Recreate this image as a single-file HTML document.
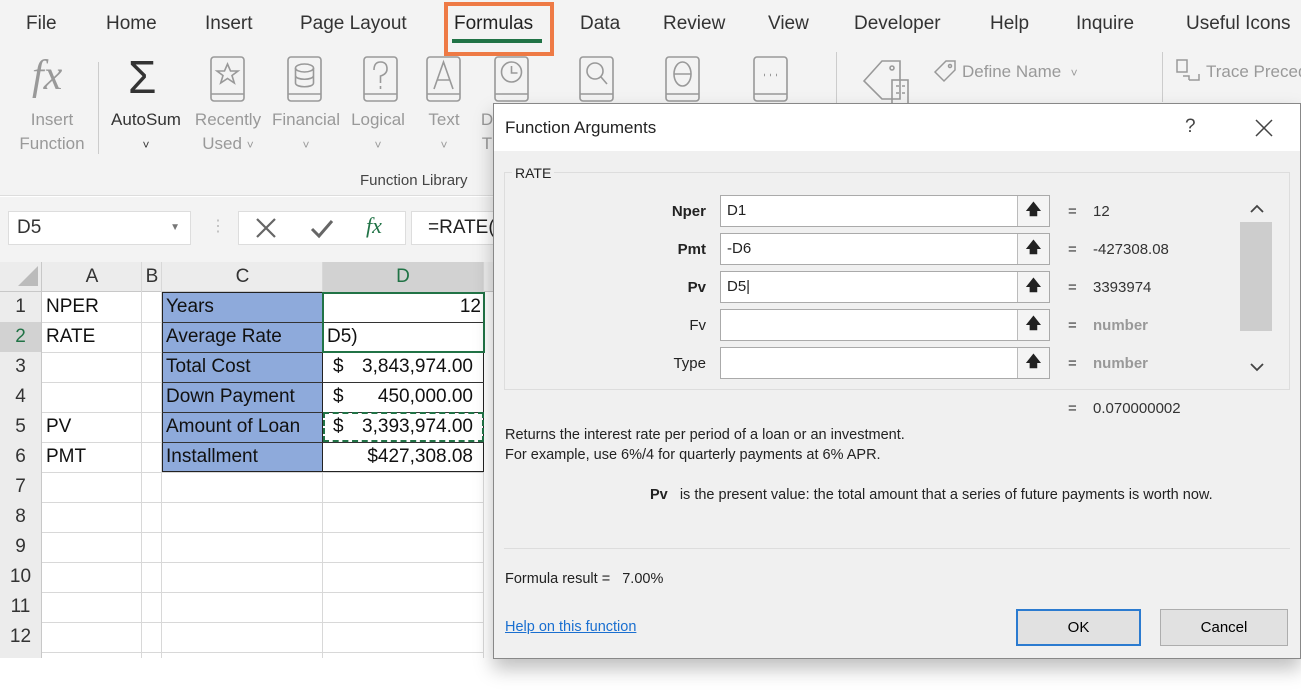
<!DOCTYPE html>
<html><head><style>
*{margin:0;padding:0;box-sizing:border-box}
body{width:1301px;height:696px;overflow:hidden;background:#fff;font-family:"Liberation Sans",sans-serif;position:relative}
.abs{position:absolute}
.tab{position:absolute;top:13px;font-size:19px;color:#333}
.rib{position:absolute;font-size:17px;color:#999;text-align:center;line-height:24px;white-space:nowrap}
.rib small{font-size:12px}
.cell{position:absolute;font-size:19px;color:#111;line-height:30px;white-space:nowrap}
.rh{position:absolute;left:0;width:41px;text-align:center;font-size:19px;color:#333;background:#ececec;line-height:30px;border-bottom:1px solid #d4d4d4}
.lab{position:absolute;right:595px;font-size:15px;color:#222}
.inp{position:absolute;left:720px;width:330px;height:32px;border:1px solid #aaa;background:#fff;font-size:15px;padding-left:6px;line-height:30px;color:#222}
.inp .b{position:absolute;right:0;top:0;width:32px;height:30px;border-left:1px solid #bbb;background:#f4f4f4;text-align:center;font-weight:bold;font-size:15px;line-height:28px}
.eq{position:absolute;left:1068px;font-size:15px;color:#333}
.val{position:absolute;left:1093px;font-size:15px;color:#333}
.t{font-size:15px;color:#222;position:absolute}
</style></head><body>
<div class="abs" style="left:0;top:0;width:1301px;height:196px;background:#f3f3f3;border-bottom:1px solid #ddd"></div>
<div class="tab" style="left:26px">File</div>
<div class="tab" style="left:106px">Home</div>
<div class="tab" style="left:205px">Insert</div>
<div class="tab" style="left:300px">Page Layout</div>
<div class="abs" style="left:444px;top:2px;width:110px;height:54px;border:4px solid #ee7a45"></div>
<div class="tab" style="left:454px;color:#222">Formulas</div>
<div class="abs" style="left:452px;top:39px;width:90px;height:4px;background:#217346"></div>
<div class="tab" style="left:580px">Data</div>
<div class="tab" style="left:663px">Review</div>
<div class="tab" style="left:768px">View</div>
<div class="tab" style="left:854px">Developer</div>
<div class="tab" style="left:990px">Help</div>
<div class="tab" style="left:1076px">Inquire</div>
<div class="tab" style="left:1186px">Useful Icons</div>
<div class="abs" style="left:32px;top:52px;font-family:'Liberation Serif',serif;font-style:italic;font-size:42px;color:#999">fx</div>
<div class="rib" style="left:12px;top:108px;width:80px">Insert<br>Function</div>
<div class="abs" style="left:98px;top:62px;width:1px;height:92px;background:#ccc"></div>
<div class="abs" style="left:128px;top:50px;font-size:46px;color:#333">&Sigma;</div>
<div class="rib" style="left:104px;top:108px;width:84px;color:#333">AutoSum<br><small>&#709;</small></div>
<div class="rib" style="left:193px;top:108px;width:70px">Recently<br>Used <small>&#709;</small></div>
<div class="rib" style="left:268px;top:108px;width:76px">Financial<br><small>&#709;</small></div>
<div class="rib" style="left:348px;top:108px;width:60px">Logical<br><small>&#709;</small></div>
<div class="rib" style="left:424px;top:108px;width:40px">Text<br><small>&#709;</small></div>
<div class="rib" style="left:480px;top:108px;width:14px">D<br>T</div>
<svg class="abs" style="left:200px;top:56px" width="600" height="48" fill="none" stroke="#999" stroke-width="1.6">
<g><rect x="11" y="1" width="33" height="44" rx="3"/><path d="M11 38h33"/><path d="M27.5 8l3 7h7.5l-6 4.5 2.3 7.5-6.8-4.5-6.8 4.5 2.3-7.5-6-4.5h7.5z"/></g>
<g transform="translate(77,0)"><rect x="11" y="1" width="33" height="44" rx="3"/><path d="M11 38h33"/><ellipse cx="27.5" cy="12" rx="9" ry="4"/><path d="M18.5 12v15c0 5 18 5 18 0V12M18.5 19.5c0 5 18 5 18 0"/></g>
<g transform="translate(153,0)"><rect x="11" y="1" width="33" height="44" rx="3"/><path d="M11 38h33"/><path d="M21 14q0-8 6.5-8t6.5 7q0 5-6.5 7v7M27.5 30v3"/></g>
<g transform="translate(216,0)"><rect x="11" y="1" width="33" height="44" rx="3"/><path d="M11 38h33"/><path d="M18 33l9.5-27 9.5 27M21 24h13"/></g>
<g transform="translate(284,0)"><rect x="11" y="1" width="33" height="44" rx="3"/><path d="M11 38h33"/><circle cx="27.5" cy="16" r="10"/><path d="M27.5 10v7h6"/></g>
<g transform="translate(369,0)"><rect x="11" y="1" width="33" height="44" rx="3"/><path d="M11 38h33"/><circle cx="26" cy="15" r="8"/><path d="M32 21l6 7"/></g>
<g transform="translate(455,0)"><rect x="11" y="1" width="33" height="44" rx="3"/><path d="M11 38h33"/><ellipse cx="27.5" cy="18" rx="8.5" ry="12"/><path d="M19 18h17"/></g>
<g transform="translate(543,0)"><rect x="11" y="1" width="33" height="44" rx="3"/><path d="M11 38h33"/><path d="M21 19h1M27 19h1M33 19h1" stroke-width="2.5"/></g>
</svg>
<div class="abs" style="left:360px;top:172px;font-size:15px;color:#444">Function Library</div>
<div class="abs" style="left:836px;top:52px;width:1px;height:100px;background:#ccc"></div>
<svg class="abs" style="left:932px;top:58px" width="28" height="26" fill="none" stroke="#999" stroke-width="1.5"><path d="M3 14L14 3h9v9L12 23z"/><circle cx="18" cy="8" r="1.5"/></svg>
<div class="abs" style="left:962px;top:62px;font-size:17px;color:#999;white-space:nowrap">Define Name &nbsp;<small style="font-size:12px">&#709;</small></div>
<div class="abs" style="left:1162px;top:52px;width:1px;height:50px;background:#ccc"></div>
<div class="abs" style="left:1206px;top:62px;font-size:17px;color:#999;white-space:nowrap">Trace Preced</div>
<svg class="abs" style="left:858px;top:56px" width="60" height="50" fill="none" stroke="#999" stroke-width="1.6"><path d="M6 25l18-20h18v38H24z"/><circle cx="34" cy="12" r="2"/><rect x="34" y="24" width="16" height="24"/><path d="M38 30h3M38 37h3M44 30h3M44 37h3"/></svg>
<svg class="abs" style="left:1175px;top:58px" width="28" height="26" fill="none" stroke="#999" stroke-width="1.5"><rect x="2" y="2" width="10" height="12"/><path d="M8 18h6v4M14 22h10v-6"/></svg>
<div class="abs" style="left:0;top:197px;width:1301px;height:66px;background:#f3f3f3"></div>
<div class="abs" style="left:8px;top:211px;width:183px;height:34px;background:#fff;border:1px solid #ddd;font-size:19px;line-height:32px;padding-left:8px;color:#333">D5<span style="position:absolute;right:10px;font-size:10px;color:#777">&#9660;</span></div>
<div class="abs" style="left:210px;top:216px;color:#bbb;font-size:16px">&#8942;</div>
<div class="abs" style="left:238px;top:211px;width:168px;height:34px;background:#fff;border:1px solid #ddd"></div>
<svg class="abs" style="left:255px;top:218px" width="22" height="20" stroke="#666" stroke-width="2.2"><path d="M2 1l18 18M20 1L2 19"/></svg>
<svg class="abs" style="left:310px;top:219px" width="24" height="20" fill="none" stroke="#666" stroke-width="3"><path d="M2 10l7 7L22 2"/></svg>
<div class="abs" style="left:366px;top:213px;font-family:'Liberation Serif',serif;font-style:italic;font-size:22px;color:#217346">fx</div>
<div class="abs" style="left:411px;top:211px;width:90px;height:34px;background:#fff;border:1px solid #ddd;font-size:19px;line-height:32px;padding-left:16px;color:#222">=RATE(</div>
<div class="abs" style="left:0;top:262px;width:493px;height:30px;background:#ececec;border-bottom:1px solid #c8c8c8"></div>
<div class="abs" style="left:18px;top:266px;width:0;height:0;border-left:20px solid transparent;border-bottom:20px solid #bbb"></div>
<div class="cell" style="left:42px;top:262px;width:100px;text-align:center;color:#333">A</div>
<div class="cell" style="left:142px;top:262px;width:20px;text-align:center;color:#333">B</div>
<div class="cell" style="left:162px;top:262px;width:161px;text-align:center;color:#333">C</div>
<div class="abs" style="left:323px;top:262px;width:160px;height:30px;background:#d2d2d2"></div>
<div class="cell" style="left:323px;top:262px;width:160px;text-align:center;color:#217346">D</div>
<div class="abs" style="left:41px;top:262px;width:1px;height:396px;background:#c8c8c8"></div>
<div class="abs" style="left:141px;top:262px;width:1px;height:396px;background:#d8d8d8"></div>
<div class="abs" style="left:161px;top:262px;width:1px;height:396px;background:#d8d8d8"></div>
<div class="abs" style="left:322px;top:262px;width:1px;height:396px;background:#d8d8d8"></div>
<div class="abs" style="left:483px;top:262px;width:1px;height:396px;background:#d8d8d8"></div>
<div class="abs" style="left:42px;top:322px;width:441px;height:1px;background:#d8d8d8"></div>
<div class="abs" style="left:42px;top:352px;width:441px;height:1px;background:#d8d8d8"></div>
<div class="abs" style="left:42px;top:382px;width:441px;height:1px;background:#d8d8d8"></div>
<div class="abs" style="left:42px;top:412px;width:441px;height:1px;background:#d8d8d8"></div>
<div class="abs" style="left:42px;top:442px;width:441px;height:1px;background:#d8d8d8"></div>
<div class="abs" style="left:42px;top:472px;width:441px;height:1px;background:#d8d8d8"></div>
<div class="abs" style="left:42px;top:502px;width:441px;height:1px;background:#d8d8d8"></div>
<div class="abs" style="left:42px;top:532px;width:441px;height:1px;background:#d8d8d8"></div>
<div class="abs" style="left:42px;top:562px;width:441px;height:1px;background:#d8d8d8"></div>
<div class="abs" style="left:42px;top:592px;width:441px;height:1px;background:#d8d8d8"></div>
<div class="abs" style="left:42px;top:622px;width:441px;height:1px;background:#d8d8d8"></div>
<div class="abs" style="left:42px;top:652px;width:441px;height:1px;background:#d8d8d8"></div>
<div class="rh" style="top:292px">1</div><div class="rh" style="top:322px;color:#217346;background:#d2d2d2">2</div><div class="rh" style="top:352px">3</div><div class="rh" style="top:382px">4</div><div class="rh" style="top:412px">5</div><div class="rh" style="top:442px">6</div><div class="rh" style="top:472px">7</div><div class="rh" style="top:502px">8</div><div class="rh" style="top:532px">9</div><div class="rh" style="top:562px">10</div><div class="rh" style="top:592px">11</div><div class="rh" style="top:622px">12</div>
<div class="abs" style="left:0;top:652px;width:41px;height:6px;background:#ececec"></div>
<div class="abs" style="left:162px;top:292px;width:161px;height:180px;background:#8eaadb;border:1px solid #222"></div>
<div class="abs" style="left:322px;top:292px;width:162px;height:180px;border:1px solid #222"></div>
<div class="abs" style="left:162px;top:322px;width:322px;height:1px;background:#333"></div>
<div class="abs" style="left:162px;top:352px;width:322px;height:1px;background:#333"></div>
<div class="abs" style="left:162px;top:382px;width:322px;height:1px;background:#333"></div>
<div class="abs" style="left:162px;top:412px;width:322px;height:1px;background:#333"></div>
<div class="abs" style="left:162px;top:442px;width:322px;height:1px;background:#333"></div>
<div class="abs" style="left:322px;top:292px;width:163px;height:61px;border:2px solid #217346"></div>
<div class="abs" style="left:323px;top:412px;width:161px;height:30px;border:2px dashed #217346"></div>
<div class="cell" style="left:46px;top:292px">NPER</div>
<div class="cell" style="left:46px;top:322px">RATE</div>
<div class="cell" style="left:46px;top:412px">PV</div>
<div class="cell" style="left:46px;top:442px">PMT</div>
<div class="cell" style="left:166px;top:292px">Years</div>
<div class="cell" style="left:166px;top:322px">Average Rate</div>
<div class="cell" style="left:166px;top:352px">Total Cost</div>
<div class="cell" style="left:166px;top:382px">Down Payment</div>
<div class="cell" style="left:166px;top:412px">Amount of Loan</div>
<div class="cell" style="left:166px;top:442px">Installment</div>
<div class="cell" style="left:323px;top:292px;width:158px;text-align:right">12</div>
<div class="cell" style="left:327px;top:322px">D5)</div>
<div class="cell" style="left:333px;top:352px">$</div><div class="cell" style="left:323px;top:352px;width:150px;text-align:right">3,843,974.00</div>
<div class="cell" style="left:333px;top:382px">$</div><div class="cell" style="left:323px;top:382px;width:150px;text-align:right">450,000.00</div>
<div class="cell" style="left:333px;top:412px">$</div><div class="cell" style="left:323px;top:412px;width:150px;text-align:right">3,393,974.00</div>
<div class="cell" style="left:323px;top:442px;width:150px;text-align:right">$427,308.08</div>
<div class="abs" style="left:0;top:658px;width:493px;height:38px;background:#fff"></div>
<div class="abs" style="left:493px;top:103px;width:808px;height:556px;background:#f0f0f0;border:1px solid #888;box-shadow:0 10px 18px rgba(0,0,0,0.25)"></div>
<div class="abs" style="left:494px;top:104px;width:806px;height:47px;background:#fff"></div>
<div class="t" style="left:505px;top:118px;font-size:17px">Function Arguments</div>
<div class="t" style="left:1185px;top:116px;font-size:19px;color:#444">?</div>
<svg class="abs" style="left:1255px;top:119px" width="18" height="18" stroke="#444" stroke-width="1.5"><path d="M1 1l16 16M17 1L1 17"/></svg>
<div class="abs" style="left:504px;top:172px;width:786px;height:218px;border:1px solid #ddd"></div>
<div class="t" style="left:512px;top:165px;background:#f0f0f0;padding:0 3px;font-size:14px">RATE</div>
<div class="lab" style="top:203px;font-weight:bold">Nper</div>
<div class="lab" style="top:241px;font-weight:bold">Pmt</div>
<div class="lab" style="top:279px;font-weight:bold">Pv</div>
<div class="lab" style="top:317px">Fv</div>
<div class="lab" style="top:355px">Type</div>
<div class="inp" style="top:195px">D1<div class="b">&#129093;</div></div>
<div class="inp" style="top:233px">-D6<div class="b">&#129093;</div></div>
<div class="inp" style="top:271px">D5|<div class="b">&#129093;</div></div>
<div class="inp" style="top:309px"><div class="b">&#129093;</div></div>
<div class="inp" style="top:347px"><div class="b">&#129093;</div></div>
<div class="eq" style="top:203px">=</div><div class="val" style="top:203px">12</div>
<div class="eq" style="top:241px">=</div><div class="val" style="top:241px">-427308.08</div>
<div class="eq" style="top:279px">=</div><div class="val" style="top:279px">3393974</div>
<div class="eq" style="top:317px">=</div><div class="val" style="top:317px;color:#999;font-weight:bold">number</div>
<div class="eq" style="top:355px">=</div><div class="val" style="top:355px;color:#999;font-weight:bold">number</div>
<div class="eq" style="top:400px">=</div><div class="val" style="top:400px">0.070000002</div>
<div class="abs" style="left:1240px;top:195px;width:32px;height:186px;background:#f0f0f0"></div>
<div class="abs" style="left:1240px;top:222px;width:32px;height:109px;background:#cdcdcd"></div>
<svg class="abs" style="left:1250px;top:204px" width="14" height="10" fill="none" stroke="#444" stroke-width="1.8"><path d="M1 8l6-6 6 6"/></svg>
<svg class="abs" style="left:1250px;top:362px" width="14" height="10" fill="none" stroke="#444" stroke-width="1.8"><path d="M1 2l6 6 6-6"/></svg>
<div class="t" style="left:505px;top:427px;font-size:14.5px">Returns the interest rate per period of a loan or an investment.</div>
<div class="t" style="left:505px;top:447px;font-size:14.5px">For example, use 6%/4 for quarterly payments at 6% APR.</div>
<div class="t" style="left:650px;top:487px;font-size:14.5px"><b>Pv</b>&nbsp;&nbsp;&nbsp;is the present value: the total amount that a series of future payments is worth now.</div>
<div class="abs" style="left:504px;top:548px;width:786px;height:1px;background:#ddd"></div>
<div class="t" style="left:505px;top:571px;font-size:14.5px">Formula result = &nbsp;&nbsp;7.00%</div>
<div class="t" style="left:505px;top:619px;font-size:14.5px;color:#1a6fd0;text-decoration:underline">Help on this function</div>
<div class="abs" style="left:1016px;top:609px;width:125px;height:37px;background:#e1e1e1;border:2px solid #2b7bd0;font-size:15px;text-align:center;line-height:33px">OK</div>
<div class="abs" style="left:1160px;top:609px;width:128px;height:37px;background:#e1e1e1;border:1px solid #adadad;font-size:15px;text-align:center;line-height:35px">Cancel</div>
</body></html>
